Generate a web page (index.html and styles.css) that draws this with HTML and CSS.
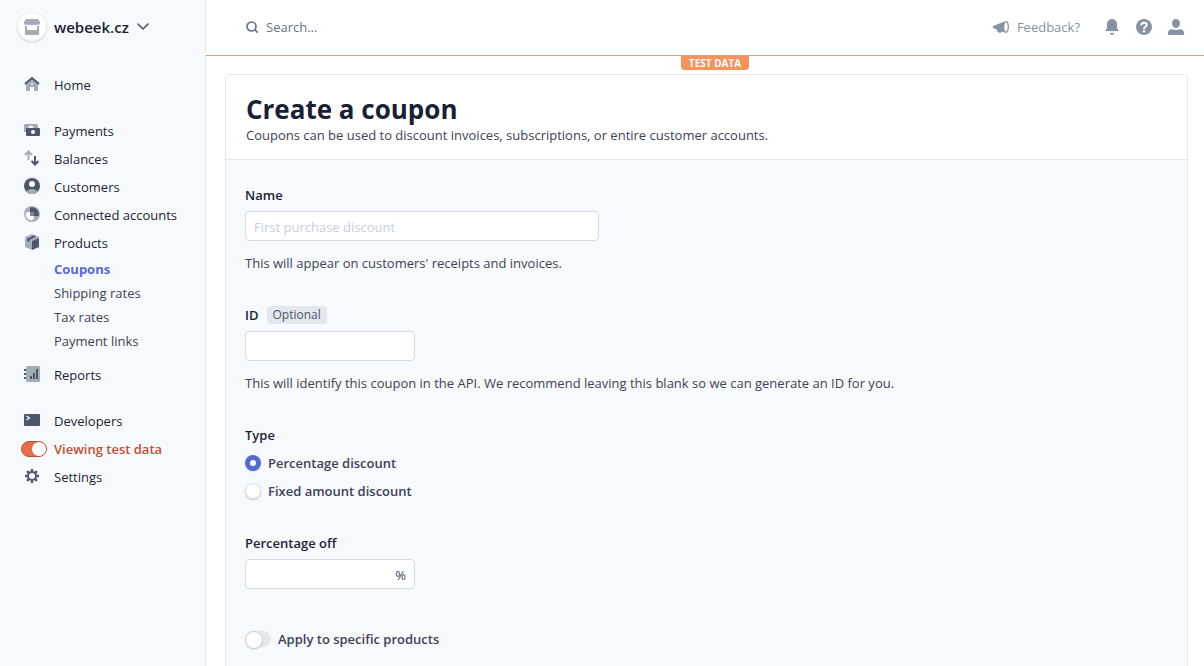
FILE: index.html
```
<!DOCTYPE html>
<html lang="en">
<head>
  <meta charset="UTF-8" />
  <meta name="viewport" content="width=device-width, initial-scale=1" />
  <title>Create a coupon</title>
  <link rel="stylesheet" href="styles.css">
</head>
<body>
  <aside class="sidebar">
    <button class="account" type="button">
      <span class="account-logo">
        <svg width="16" height="16" viewBox="0 0 16 16" fill="#a3acb9"><path d="M2 0h12l2 3v1.200a2 2 0 0 1-3.200 1.200 2 2 0 0 1-3.200 0 2 2 0 0 1-3.200 0 2 2 0 0 1-3.200 0A2 2 0 0 1 0 4.200V3z"/><path d="M1 7h2v4h10V7h2v9H1z"/></svg>
      </span>
      <span class="account-name">webeek.cz</span>
      <svg width="12" height="8" viewBox="0 0 12 8" fill="none" stroke="#4f566b" stroke-width="1.600" stroke-linecap="round" stroke-linejoin="round"><path d="M1 1l5 5 5-5"/></svg>
    </button>

    <nav class="menu">
      <ul class="menu-group">
        <li><a class="menu-link" href="#">
          <svg width="16" height="16" viewBox="0 0 16 16"><path fill="#a3acb9" d="M2 8l6-5 6 5v7h-4v-4H6v4H2z"/><circle cx="8" cy="8" r="1" fill="#f7fafc"/><path fill="none" stroke="#4f566b" stroke-width="2" stroke-linejoin="round" d="M1 8l7-6 7 6"/></svg>
          Home</a></li>
      </ul>

      <ul class="menu-group">
        <li><a class="menu-link" href="#">
          <svg width="16" height="16" viewBox="0 0 16 16"><path fill="#a3acb9" d="M1 2h12a1 1 0 0 1 1 1v7H0V3a1 1 0 0 1 1-1z"/><path fill="#f7fafc" d="M4.500 6a2.500 2.500 0 0 1 5 0z"/><rect x="2" y="6" width="14" height="8" rx="1" fill="#4f566b"/><circle cx="9" cy="10" r="2" fill="#f7fafc"/></svg>
          Payments</a></li>
        <li><a class="menu-link" href="#">
          <svg width="16" height="16" viewBox="0 0 16 16" fill="none" stroke-width="2"><path stroke="#a3acb9" d="M4.500 10V1.500M1 5l3.500-3.500L8 5"/><path stroke="#4f566b" d="M11 6v8.500M7.500 11l3.500 3.500 3.500-3.500"/></svg>
          Balances</a></li>
        <li><a class="menu-link" href="#">
          <svg width="16" height="16" viewBox="0 0 16 16"><circle cx="8" cy="8" r="8" fill="#4f566b"/><path fill="#a3acb9" d="M2.500 13.800C3.500 12 5.500 11 8 11s4.500 1 5.500 2.800A8 8 0 0 1 8 16a8 8 0 0 1-5.500-2.200z"/><circle cx="8" cy="6" r="3" fill="#f7fafc"/></svg>
          Customers</a></li>
        <li><a class="menu-link" href="#">
          <svg width="16" height="16" viewBox="0 0 16 16"><circle cx="8" cy="8" r="8" fill="#a3acb9"/><path fill="#fff" d="M6 6v4h4a4.500 4.500 0 0 1-2.500 4.500A6.500 6.500 0 0 1 1.500 7.500C2.500 6.200 4 6 6 6z"/><path fill="#4f566b" d="M6 1.500a7 7 0 0 1 8.500 8.500H10V6H6z"/><path fill="#7d8598" d="M6 6h4v4H6z"/></svg>
          Connected accounts</a></li>
        <li><a class="menu-link" href="#">
          <svg width="16" height="16" viewBox="0 0 16 16"><path fill="#a3acb9" d="M8 0l7 3v1L8 7 1 4V3z"/><path fill="#4f566b" d="M15 4v9l-7 3V7z"/><path fill="#a3acb9" d="M1 4l7 3v9l-7-3z"/><path fill="#4f566b" d="M3 4.800L10 1.500l2 1L5.500 5.700V8L3 7z"/></svg>
          Products</a>
          <ul class="submenu">
            <li><a class="submenu-link active" href="#">Coupons</a></li>
            <li><a class="submenu-link" href="#">Shipping rates</a></li>
            <li><a class="submenu-link" href="#">Tax rates</a></li>
            <li><a class="submenu-link" href="#">Payment links</a></li>
          </ul>
        </li>
        <li><a class="menu-link" href="#">
          <svg width="16" height="16" viewBox="0 0 16 16"><rect x="2" y="0" width="14" height="16" rx="1.500" fill="#a3acb9"/><path fill="#4f566b" d="M0 3h2v2H0zM0 7h2v2H0zM0 11h2v2H0zM6 10h2v3H6zM9 7h2v6H9zM12 3h2v10h-2z"/></svg>
          Reports</a></li>
      </ul>

      <ul class="menu-group">
        <li><a class="menu-link" href="#">
          <svg width="16" height="16" viewBox="0 0 16 16"><rect y="2" width="16" height="12" rx="1" fill="#4f566b"/><path fill="none" stroke="#fff" stroke-width="1.200" d="M2.500 4l3 2-3 2"/></svg>
          Developers</a></li>
        <li><label class="menu-link test-mode">
          <input class="switch switch-test" type="checkbox" checked />
          Viewing test data</label></li>
        <li><a class="menu-link" href="#">
          <svg width="16" height="16" viewBox="0 0 16 16" fill="none" stroke="#4f566b"><circle cx="8" cy="8" r="4" stroke-width="2"/><path stroke-width="2.400" d="M8 1v2.500M8 12.500V15M1 8h2.500M12.500 8H15M3.100 3.100l1.700 1.700M11.200 11.200l1.700 1.700M3.100 12.900l1.700-1.700M11.200 4.800l1.700-1.700"/></svg>
          Settings</a></li>
      </ul>
    </nav>
  </aside>

  <div class="page">
    <header class="topbar">
      <label class="search">
        <svg width="12" height="12" viewBox="0 0 12 12" fill="none" stroke="#697386" stroke-width="1.700" stroke-linecap="round"><circle cx="5.500" cy="5.500" r="4.500"/><path d="M9 9l2.200 2.200"/></svg>
        <input type="search" placeholder="Search..." aria-label="Search" />
      </label>
      <button class="feedback" type="button">
        <svg width="16" height="16" viewBox="0 0 16 16"><path fill="#8792a2" d="M0 7l11.500-4.500c-1 3-1 8 0 11L9 12.500c-.8 1.200-2 1.700-3.300 1.100S3.800 11.800 4 10.500L0 9z"/><ellipse cx="13" cy="8" rx="2.300" ry="5.300" fill="#fff" stroke="#8792a2" stroke-width="1.300"/></svg>
        Feedback?
      </button>
      <div class="topbar-icons">
        <button type="button" aria-label="Notifications">
          <svg width="16" height="16" viewBox="0 0 16 16" fill="#8792a2"><path d="M8 0a5 5 0 0 1 5 5v4.500l1.500 1.500v1h-13v-1L3 9.500V5a5 5 0 0 1 5-5zM5.800 14h4.400c-.4 1.200-1.200 2-2.200 2s-1.800-.8-2.200-2z"/></svg>
        </button>
        <button type="button" aria-label="Help">
          <svg width="16" height="16" viewBox="0 0 16 16"><circle cx="8" cy="8" r="8" fill="#8792a2"/><path fill="none" stroke="#fff" stroke-width="2" d="M5.300 6.200C5.300 4.500 6.500 3.700 8 3.700s2.700.9 2.700 2.200C10.700 7.700 8 7.800 8 10"/><circle cx="8" cy="12.300" r="1.200" fill="#fff"/></svg>
        </button>
        <button type="button" aria-label="Profile">
          <svg width="16" height="16" viewBox="0 0 16 16" fill="#8792a2"><path d="M8 0c2.200 0 4 1.700 4 4.300S10.200 9 8 9 4 6.900 4 4.300 5.800 0 8 0zM0 14c0-2.200 1.500-3.500 4-3.700 1.200.5 2.500.7 4 .7s2.800-.2 4-.7c2.500.2 4 1.500 4 3.700v1a1 1 0 0 1-1 1H1a1 1 0 0 1-1-1z"/></svg>
        </button>
      </div>
    </header>

    <div class="test-banner"><span>TEST DATA</span></div>

    <main class="card">
      <div class="card-header">
        <h1>Create a coupon</h1>
        <p>Coupons can be used to discount invoices, subscriptions, or entire customer accounts.</p>
      </div>
      <form class="card-body">
        <div class="field">
          <label class="label" for="name">Name</label>
          <input class="input input-wide" id="name" type="text" placeholder="First purchase discount" />
          <p class="help">This will appear on customers' receipts and invoices.</p>
        </div>

        <div class="field">
          <label class="label" for="coupon-id">ID <span class="tag">Optional</span></label>
          <input class="input" id="coupon-id" type="text" />
          <p class="help">This will identify this coupon in the API. We recommend leaving this blank so we can generate an ID for you.</p>
        </div>

        <fieldset class="field options">
          <legend class="label">Type</legend>
          <label class="option"><input class="radio" type="radio" name="type" checked /> Percentage discount</label>
          <label class="option"><input class="radio" type="radio" name="type" /> Fixed amount discount</label>
        </fieldset>

        <div class="field">
          <label class="label" for="percent">Percentage off</label>
          <div class="input input-group">
            <input id="percent" type="text" />
            <span>%</span>
          </div>
        </div>

        <label class="option option-switch"><input class="switch" type="checkbox" /> Apply to specific products</label>
      </form>
    </main>
  </div>
</body>
</html>
```
FILE: styles.css
```
* {
  box-sizing: border-box;
}
body {
  margin: 0;
  display: flex;
  min-height: 100vh;
  font-family: "Open Sans", "Noto Sans", sans-serif;
  font-size: 13px;
  line-height: 20px;
  color: #3c4257;
  background: #fff;
}
h1, p, ul, fieldset, legend {
  margin: 0;
  padding: 0;
}
ul {
  list-style: none;
}
a {
  text-decoration: none;
}
svg {
  display: block;
  flex: none;
}
button, input {
  font: inherit;
  color: inherit;
}
button {
  padding: 0;
  border: none;
  background: none;
  cursor: pointer;
}

/* Sidebar */
.sidebar {
  flex: 0 0 206px;
  padding: 12px 18px;
  background: #f7fafc;
  border-right: 1px solid #e3e8ee;
}
.account {
  display: flex;
  align-items: center;
  gap: 8px;
  height: 29px;
  color: #1a1f36;
  font-size: 15px;
  font-weight: 600;
}
.account-logo {
  display: flex;
  align-items: center;
  justify-content: center;
  width: 28px;
  height: 28px;
  border-radius: 50%;
  background: #fff;
  box-shadow: 0 1px 3px rgba(60, 66, 87, 0.25);
}
.menu {
  display: flex;
  flex-direction: column;
  gap: 18px;
  margin-top: 30px;
  padding-left: 3px;
}
.menu-link {
  display: flex;
  align-items: center;
  gap: 14px;
  height: 28px;
  padding-left: 3px;
  color: #1a1f36;
}
.menu-link svg {
  margin-bottom: 2px;
}
.test-mode {
  gap: 7px;
  padding-left: 0;
  color: #c44c34;
  font-weight: 600;
}
.submenu {
  padding: 0 0 8px 33px;
}
.submenu-link {
  display: block;
  line-height: 24px;
  color: #3c4257;
}
.submenu-link.active {
  color: #5469d4;
  font-weight: 700;
}

/* Top bar */
.page {
  flex: 1;
  min-width: 0;
  display: flex;
  flex-direction: column;
}
.topbar {
  display: flex;
  align-items: center;
  gap: 24px;
  height: 56px;
  padding: 0 20px 1px 40px;
  border-bottom: 1px solid #ed9a72;
}
.search {
  flex: 1;
  display: flex;
  align-items: center;
  gap: 8px;
}
.search input {
  flex: 1;
  min-width: 0;
  padding: 0;
  border: none;
  outline: none;
  background: none;
  font-weight: 500;
}
.search input::placeholder {
  color: #697386;
}
.feedback {
  display: flex;
  align-items: center;
  gap: 8px;
  color: #8792a2;
  font-weight: 500;
}
.topbar-icons {
  display: flex;
  gap: 16px;
}
.test-banner {
  display: flex;
  justify-content: center;
  align-items: flex-start;
  height: 18px;
  padding-left: 20px;
}
.test-banner span {
  padding: 0 8px;
  border-radius: 0 0 4px 4px;
  background: #f5925e;
  color: #fff;
  font-size: 10px;
  line-height: 14px;
  font-weight: 700;
}

/* Coupon form */
.card {
  flex: 1;
  margin: 0 16px 0 19px;
  display: flex;
  flex-direction: column;
  border: 1px solid #e3e8ee;
  border-bottom: none;
  border-radius: 5px 5px 0 0;
}
.card-header {
  padding: 18px 20px 14px;
  border-bottom: 1px solid #e3e8ee;
}
.card-header h1 {
  color: #1a1f36;
  font-size: 26px;
  line-height: 32px;
  font-weight: 700;
}
.card-body {
  flex: 1;
  padding: 25px 19px 16px;
  background: #f7fafc;
}
.field {
  margin-bottom: 32px;
  border: none;
}
.label {
  display: flex;
  align-items: center;
  gap: 8px;
  margin-bottom: 6px;
  color: #1a1f36;
  font-weight: 600;
}
.tag {
  padding: 0 6px;
  border-radius: 4px;
  background: #e3e8ee;
  color: #4f566b;
  font-size: 12px;
  line-height: 18px;
  font-weight: 500;
}
.input {
  display: block;
  width: 170px;
  height: 30px;
  padding: 2px 8px 0;
  border: 1px solid #d5dbe3;
  border-radius: 4px;
  background: #fff;
}
.input-wide {
  width: 354px;
}
.input::placeholder {
  color: #c9ced8;
}
.input-group {
  display: flex;
  align-items: center;
}
.input-group input {
  flex: 1;
  min-width: 0;
  padding: 0;
  border: none;
  outline: none;
}
.help {
  margin-top: 12px;
}
.options .label {
  margin-bottom: 8px;
}
.options .option + .option {
  margin-top: 8px;
}
.option {
  display: flex;
  align-items: center;
  gap: 7px;
  font-weight: 600;
}
.option-switch {
  margin-top: 40px;
}
.radio {
  appearance: none;
  width: 16px;
  height: 16px;
  margin: 0;
  border-radius: 50%;
  background: #fff;
  box-shadow: 0 0 0 1px rgba(60, 66, 87, 0.16) inset, 0 1px 2px rgba(60, 66, 87, 0.25);
}
.radio:checked {
  border: 5px solid #5469d4;
  box-shadow: 0 1px 2px rgba(60, 66, 87, 0.16);
}
.switch {
  appearance: none;
  flex: none;
  display: flex;
  width: 26px;
  height: 16px;
  margin: 0;
  border-radius: 8px;
  background: #e3e8ee;
}
.switch::before {
  content: "";
  width: 16px;
  height: 16px;
  border: 1px solid #c8cdd6;
  border-radius: 50%;
  background: #fff;
  box-shadow: 0 1px 1px rgba(60, 66, 87, 0.12);
}
.switch-test {
  justify-content: flex-end;
  border: 1px solid #c44c34;
  background: #e56f4a;
}
.switch-test::before {
  width: 14px;
  height: 14px;
  border: none;
  box-shadow: none;
}
```
